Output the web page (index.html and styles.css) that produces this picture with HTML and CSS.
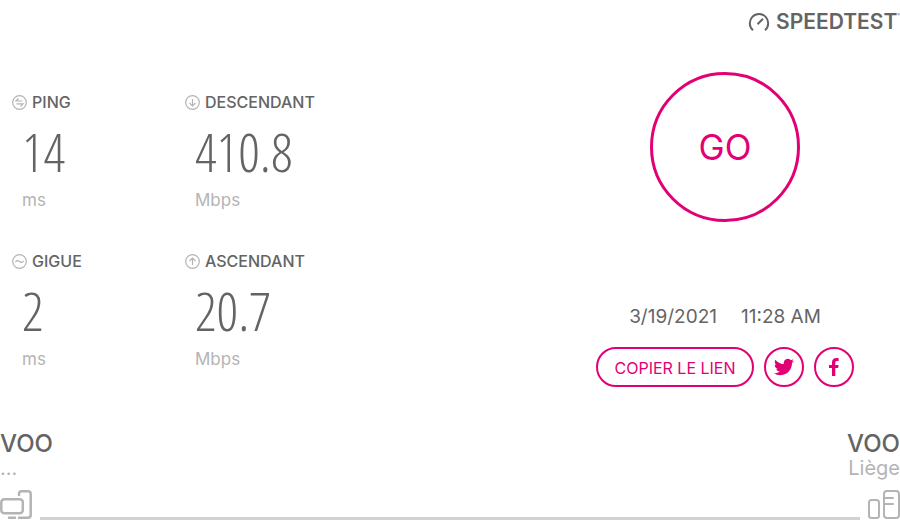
FILE: index.html
```html
<!DOCTYPE html>
<html lang="fr">
<head>
<meta charset="utf-8">
<meta name="viewport" content="width=device-width, initial-scale=1">
<title>Speedtest</title>
<link rel="stylesheet" href="styles.css">
</head>
<body>
<div class="page">
  <header class="brand">
    <svg class="brand-icon" width="22" height="20" viewBox="0 0 22 20" aria-hidden="true"><path d="M5 18.200A9.200 9.200 0 1 1 17 18.200" /><path d="M9.500 12.200L15 6.800"/></svg>
    <span class="brand-name">SPEEDTEST</span><span class="brand-mark">®</span>
  </header>
  <main class="content">
    <section class="metrics">
      <article class="metric">
        <h2 class="metric-title"><svg class="icon" width="15" height="15" viewBox="0 0 15 15" aria-hidden="true"><circle cx="7.500" cy="7.500" r="6.800"/><path d="M6.500 3.500L4 6H10.500M4.500 8.800H11L8.500 11.500"/></svg>PING</h2>
        <p class="value">14</p>
        <p class="unit">ms</p>
      </article>
      <article class="metric">
        <h2 class="metric-title"><svg class="icon" width="15" height="15" viewBox="0 0 15 15" aria-hidden="true"><circle cx="7.500" cy="7.500" r="6.800"/><path d="M7.500 4V11M4.500 8L7.500 11L10.500 8"/></svg>DESCENDANT</h2>
        <p class="value">410.8</p>
        <p class="unit">Mbps</p>
      </article>
      <article class="metric">
        <h2 class="metric-title"><svg class="icon" width="15" height="15" viewBox="0 0 15 15" aria-hidden="true"><circle cx="7.500" cy="7.500" r="6.800"/><path d="M3.500 8.300C4.500 6.200 6 6.200 7.500 7.500S10.500 8.800 11.500 6.700"/></svg>GIGUE</h2>
        <p class="value">2</p>
        <p class="unit">ms</p>
      </article>
      <article class="metric">
        <h2 class="metric-title"><svg class="icon" width="15" height="15" viewBox="0 0 15 15" aria-hidden="true"><circle cx="7.500" cy="7.500" r="6.800"/><path d="M7.500 11V4M4.500 7L7.500 4L10.500 7"/></svg>ASCENDANT</h2>
        <p class="value">20.7</p>
        <p class="unit">Mbps</p>
      </article>
    </section>
    <section class="panel">
      <button class="go" type="button">GO</button>
      <p class="stamp"><span>3/19/2021</span><span>11:28 AM</span></p>
      <div class="share">
        <button class="pill" type="button">COPIER LE LIEN</button>
        <a class="round" href="#" aria-label="Twitter"><svg width="20" height="18" viewBox="0 0 24 20" aria-hidden="true"><path d="M23.950 2.570a10 10 0 0 1-2.820.770 4.960 4.960 0 0 0 2.160-2.720 9.900 9.900 0 0 1-3.120 1.180 4.920 4.920 0 0 0-8.380 4.480C7.690 6.090 4.070 4.130 1.640 1.160a4.820 4.820 0 0 0-.670 2.480c0 1.710.870 3.210 2.190 4.100a4.900 4.900 0 0 1-2.230-.620v.060a4.920 4.920 0 0 0 3.950 4.830 5 5 0 0 1-2.210.080 4.940 4.940 0 0 0 4.600 3.420A9.870 9.870 0 0 1 0 17.540a14 14 0 0 0 7.560 2.210c9.050 0 14-7.500 14-13.980v-.640a9.900 9.900 0 0 0 2.390-2.560z"/></svg></a>
        <a class="round" href="#" aria-label="Facebook"><svg width="10" height="18" viewBox="0 0 10 18" aria-hidden="true"><path d="M3 18V10H0V7H3V4.500C3 1.500 4.700 0 7.300 0H9.600V3H8C6.700 3 6.300 3.500 6.300 4.700V7H9.600L9.200 10H6.300V18Z"/></svg></a>
      </div>
    </section>
  </main>
  <footer class="route">
    <div class="ends">
      <div><p class="host">VOO</p><p class="place">...</p></div>
      <div class="end-right"><p class="host">VOO</p><p class="place">Liège</p></div>
    </div>
    <div class="link">
      <svg class="device" width="32" height="30" viewBox="0 0 32 30" aria-hidden="true"><rect x="1.300" y="9.300" width="21.500" height="14" rx="3"/><path d="M19 5V4Q19 1.300 21.700 1.300H28Q30.700 1.300 30.700 4V25Q30.700 27.700 28 27.700H19M9 27.700H15"/></svg>
      <div class="line"></div>
      <svg class="device server" width="32" height="30" viewBox="0 0 32 30" aria-hidden="true"><rect x="1" y="10" width="10" height="18" rx="2.500"/><rect x="16" y="1" width="15" height="27" rx="3"/><path d="M16 8H25M16 14H25"/></svg>
    </div>
  </footer>
</div>
</body>
</html>
```
FILE: styles.css
```css
* { box-sizing: border-box; }
body {
  margin: 0;
  background: #fff;
  color: #646464;
  font-family: Inter, "Liberation Sans", sans-serif;
}
p, h2 { margin: 0; }
svg { display: block; flex: none; }
.page {
  min-height: 100vh;
  display: flex;
  flex-direction: column;
}
.brand {
  display: flex;
  justify-content: flex-end;
  align-items: center;
  height: 44px;
}
.brand-icon { fill: none; stroke: #646464; stroke-width: 2; margin-right: 6px; }
.brand-name { font-size: 21px; font-weight: 600; line-height: 24px; }
.brand-mark { font-size: 4px; align-self: flex-start; padding-top: 12px; }
.content {
  flex: 1;
  display: grid;
  grid-template-columns: 11fr 7fr;
}
.metrics {
  display: grid;
  grid-template-columns: 173px 1fr;
  grid-auto-rows: 159px;
  padding: 48px 0 0 12px;
  align-content: start;
}
.metric-title {
  display: flex;
  align-items: center;
  gap: 5px;
  font-size: 16px;
  font-weight: 500;
  line-height: 20px;
}
.icon { fill: none; stroke: #b4b4b4; stroke-width: 1.200; }
.value {
  padding: 2px 0 0 10px;
  font-family: "Open Sans Condensed Light", "Roboto Condensed", Roboto, sans-serif;
  font-size: 54px;
  font-weight: 100;
  line-height: 74px;
}
.unit { padding-left: 10px; font-size: 17px; line-height: 24px; color: #b4b4b4; }
.panel {
  display: flex;
  flex-direction: column;
  align-items: center;
  padding-top: 28px;
}
.go {
  width: 150px;
  height: 150px;
  border: 3px solid #e20074;
  border-radius: 50%;
  background: none;
  color: #e20074;
  font: 400 35px/40px Inter, sans-serif;
}
.stamp {
  display: flex;
  gap: 24px;
  margin-top: 83px;
  font-size: 19px;
  line-height: 24px;
}
.share { display: flex; gap: 10px; margin-top: 18px; }
.pill {
  height: 40px;
  padding: 2px 16px 0;
  border: 2px solid #e20074;
  border-radius: 20px;
  background: none;
  color: #e20074;
  font: 400 16px/20px Inter, sans-serif;
}
.round {
  display: flex;
  align-items: center;
  justify-content: center;
  width: 40px;
  height: 40px;
  border: 2px solid #e20074;
  border-radius: 50%;
  fill: #e20074;
}
.ends { display: flex; justify-content: space-between; }
.end-right { text-align: right; }
.host { font-size: 24px; font-weight: 500; line-height: 24px; }
.place { font-size: 20px; line-height: 24px; color: #b4b4b4; }
.link { display: flex; align-items: flex-end; gap: 8px; margin-top: 10px; }
.line { flex: 1; height: 3px; background: #d2d2d2; }
.device { fill: none; stroke: #b4b4b4; stroke-width: 2.500; stroke-linecap: round; }
.server { stroke-width: 2; }
```
